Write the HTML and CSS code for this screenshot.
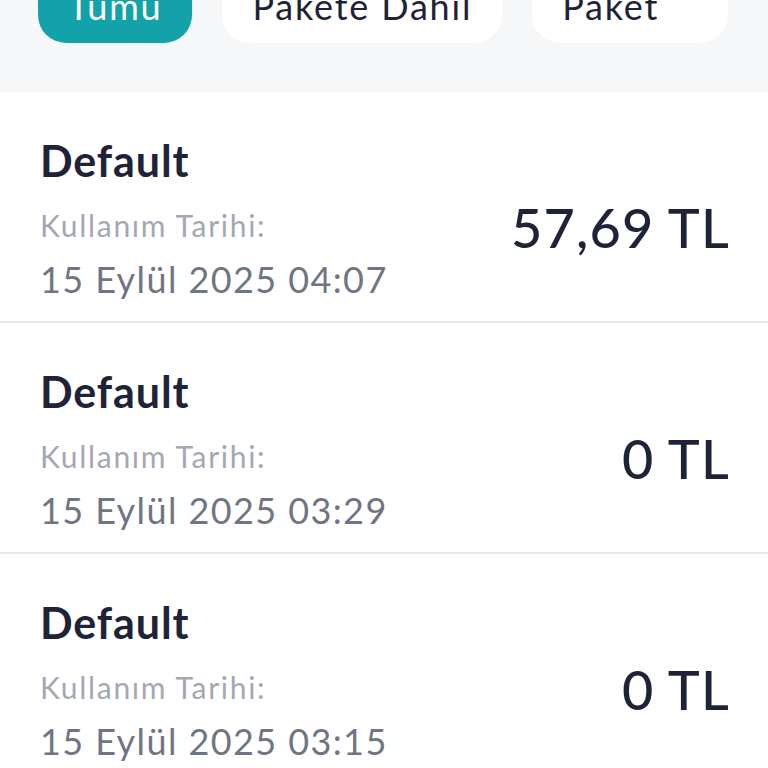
FILE: index.html
```html
<!DOCTYPE html>
<html lang="tr">
<head>
<meta charset="utf-8">
<link rel="stylesheet" href="styles.css">
</head>
<body>
<div class="filters">
  <div class="chips">
    <div class="chip chip-active">Tümü</div>
    <div class="chip">Pakete Dahil</div>
    <div class="chip chip-wide">Paket</div>
  </div>
</div>
<div class="list">
  <div class="row">
    <div class="info">
      <div class="title">Default</div>
      <div class="label">Kullanım Tarihi:</div>
      <div class="date">15 Eylül 2025 04:07</div>
    </div>
    <div class="price">57,69 TL</div>
  </div>
  <div class="row">
    <div class="info">
      <div class="title">Default</div>
      <div class="label">Kullanım Tarihi:</div>
      <div class="date">15 Eylül 2025 03:29</div>
    </div>
    <div class="price">0 TL</div>
  </div>
  <div class="row">
    <div class="info">
      <div class="title">Default</div>
      <div class="label">Kullanım Tarihi:</div>
      <div class="date">15 Eylül 2025 03:15</div>
    </div>
    <div class="price">0 TL</div>
  </div>
</div>
</body>
</html>
```
FILE: styles.css
```css
html, body {
  margin: 0;
  padding: 0;
  background: #ffffff;
  font-family: "Lato", "Open Sans", sans-serif;
  color: #1f2337;
  overflow: hidden;
}
.filters {
  display: flow-root;
  background: #f6f7f9;
  height: 92px;
}
.chips {
  display: flex;
  gap: 30px;
  padding-left: 38px;
  margin-top: -27px;
}
.chip {
  height: 70px;
  border-radius: 28px;
  background: #ffffff;
  padding: 0 30px 4px;
  display: flex;
  align-items: center;
  font-size: 36px;
  letter-spacing: 1.8px;
  color: #1f2337;
  box-sizing: border-box;
}
.chip-active {
  background: #13a2a9;
  color: #ffffff;
}
.chip-wide {
  min-width: 196px;
}
.row {
  display: flex;
  justify-content: space-between;
  align-items: flex-start;
  padding: 43px 40px 20px;
  border-bottom: 2px solid #e6e8eb;
}
.info {
  display: flex;
  flex-direction: column;
}
.title {
  font-size: 43px;
  font-weight: 700;
  line-height: 52px;
  letter-spacing: 0.9px;
  color: #1f2337;
}
.label {
  font-size: 30px;
  line-height: 40px;
  margin-top: 18px;
  letter-spacing: 1.7px;
  color: #a3a8b4;
}
.date {
  font-size: 36px;
  line-height: 44px;
  margin-top: 12px;
  letter-spacing: 1.4px;
  color: #6f7582;
}
.price {
  font-size: 54px;
  line-height: 64px;
  margin-top: 61px;
  margin-right: -2px;
  font-weight: 500;
  letter-spacing: 1.2px;
  color: #1f2337;
}
```
